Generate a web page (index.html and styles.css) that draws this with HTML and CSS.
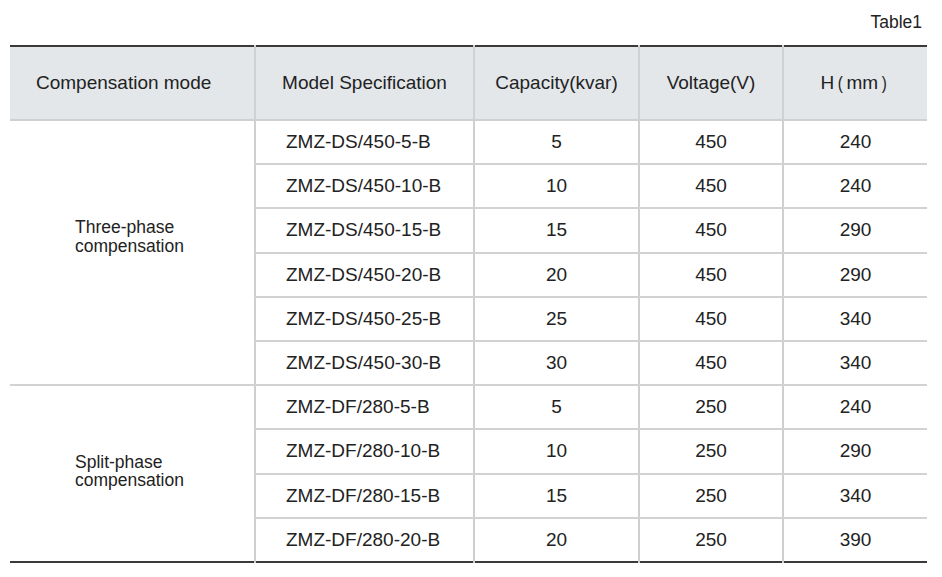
FILE: index.html
```html
<!DOCTYPE html>
<html>
<head>
<meta charset="utf-8">
<link rel="stylesheet" href="styles.css">
</head>
<body>
<div class="page">
  <div class="caption">Table1</div>
  <table class="spec">
    <colgroup>
      <col class="c1"><col class="c2"><col class="c3"><col class="c4"><col class="c5">
    </colgroup>
    <thead>
      <tr>
        <th class="mode-h">Compensation mode</th>
        <th>Model Specification</th>
        <th>Capacity(kvar)</th>
        <th>Voltage(V)</th>
        <th>H<span class="par">(</span>mm<span class="par">)</span></th>
      </tr>
    </thead>
    <tbody class="grp">
      <tr><td rowspan="6" class="mode mode-a">Three-phase<br>compensation</td><td class="model">ZMZ-DS/450-5-B</td><td>5</td><td>450</td><td>240</td></tr>
      <tr><td class="model">ZMZ-DS/450-10-B</td><td>10</td><td>450</td><td>240</td></tr>
      <tr><td class="model">ZMZ-DS/450-15-B</td><td>15</td><td>450</td><td>290</td></tr>
      <tr><td class="model">ZMZ-DS/450-20-B</td><td>20</td><td>450</td><td>290</td></tr>
      <tr><td class="model">ZMZ-DS/450-25-B</td><td>25</td><td>450</td><td>340</td></tr>
      <tr><td class="model">ZMZ-DS/450-30-B</td><td>30</td><td>450</td><td>340</td></tr>
    </tbody>
    <tbody class="grp">
      <tr><td rowspan="4" class="mode mode-b">Split-phase<br>compensation</td><td class="model">ZMZ-DF/280-5-B</td><td>5</td><td>250</td><td>240</td></tr>
      <tr><td class="model">ZMZ-DF/280-10-B</td><td>10</td><td>250</td><td>290</td></tr>
      <tr><td class="model">ZMZ-DF/280-15-B</td><td>15</td><td>250</td><td>340</td></tr>
      <tr><td class="model">ZMZ-DF/280-20-B</td><td>20</td><td>250</td><td>390</td></tr>
    </tbody>
  </table>
</div>
</body>
</html>
```
FILE: styles.css
```css
html, body {
  margin: 0;
  padding: 0;
  background: #ffffff;
}
.page {
  width: 942px;
  font-family: "Liberation Sans", Arial, sans-serif;
  color: #222;
}
.caption {
  width: 922px;
  text-align: right;
  font-size: 17.5px;
  line-height: 20px;
  padding-top: 12px;
  height: 45px;
  box-sizing: border-box;
  color: #222;
}
.spec {
  margin-left: 10px;
  width: 917px;
  border-collapse: collapse;
  table-layout: fixed;
  border-top: 2px solid #3a3a3a;
  border-bottom: 2px solid #3a3a3a;
  font-size: 19px;
}
.c1 { width: 245px; }
.c2 { width: 219px; }
.c3 { width: 165px; }
.c4 { width: 144px; }
.c5 { width: 144px; }
.spec th {
  background: #e3e7ea;
  font-weight: normal;
  height: 72px;
  padding: 0;
  text-align: center;
  border-left: 2px solid #cfd2d4;
  border-bottom: 2px solid #d0d0d0;
}
.spec th:first-child { border-left: none; }
.spec th.mode-h {
  text-align: left;
  padding-left: 26px;
}
.par {
  display: inline-block;
  margin: 0 3px 0 3px;
  transform: scaleX(0.8);
}
.spec td {
  height: 42.2px;
  padding: 0;
  text-align: center;
  border-left: 2px solid #cfcfcf;
  border-bottom: 2px solid #d2d2d2;
  vertical-align: middle;
}
.spec td.mode {
  border-left: none;
  text-align: left;
  padding-left: 65px;
  font-size: 17.5px;
  line-height: 18.5px;
}
.spec td.mode-a { padding-bottom: 32px; }
.spec td.mode-b { padding-bottom: 5px; }
.spec td.model {
  text-align: left;
  padding-left: 30px;
}
.spec tbody:last-child tr:last-child td,
.spec td.mode-b { border-bottom: none; }
```
